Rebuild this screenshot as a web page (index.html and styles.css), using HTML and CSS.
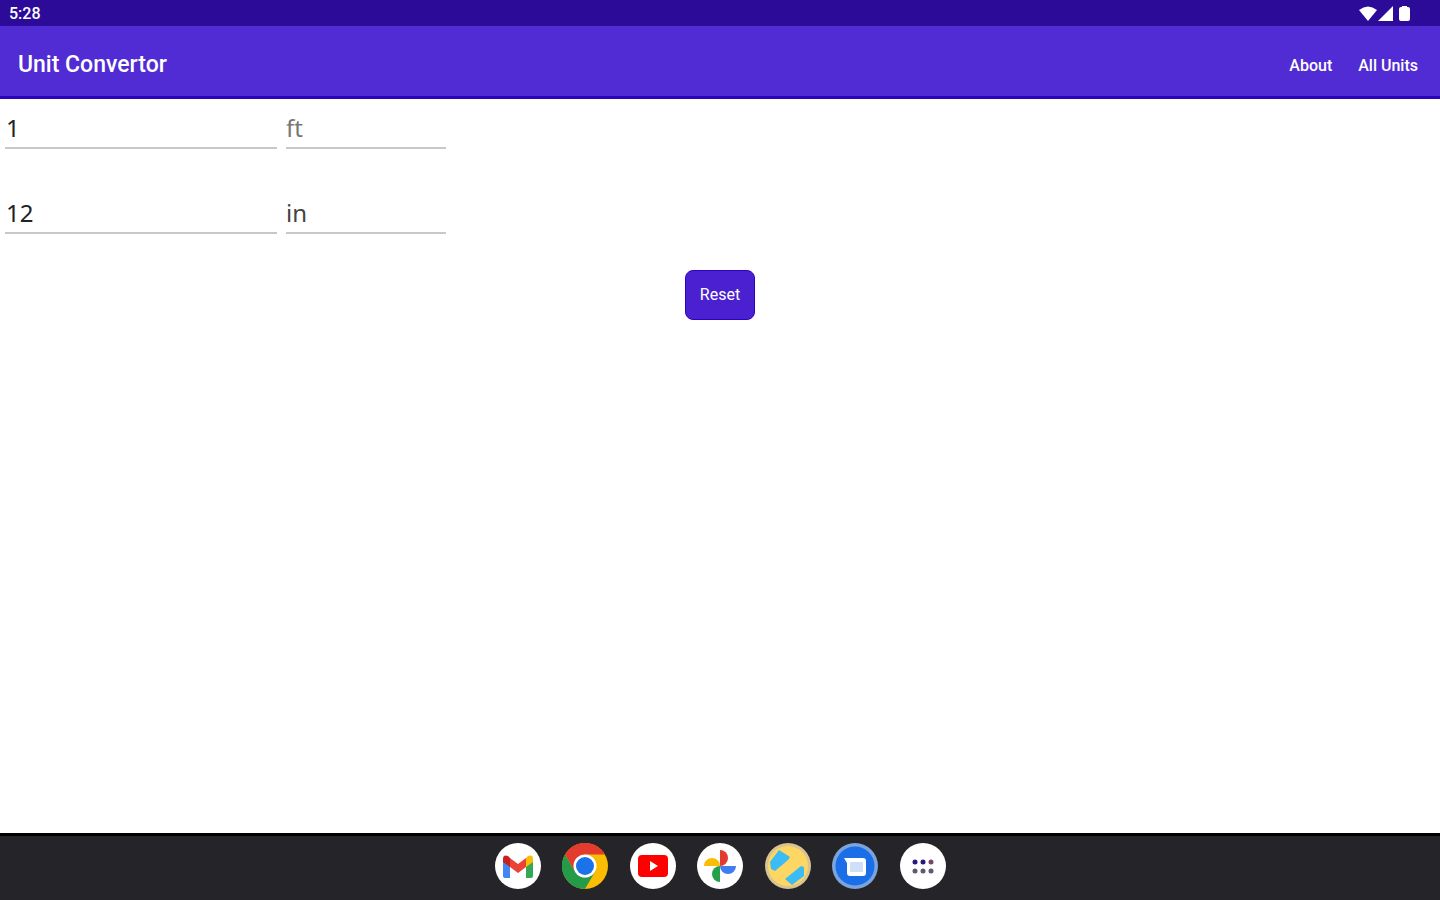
FILE: index.html
```html
<!DOCTYPE html>
<html lang="en">
<head>
    <meta charset="utf-8">
    <title>Unit Convertor</title>
    <meta name="viewport" content="width=device-width, initial-scale=1">
    <link rel="stylesheet" href="styles.css">
</head>
<body>
    <div class="status-bar">
        <span class="clock">5:28</span>
        <div class="status-icons">
            <svg width="18" height="16" viewBox="0 0 18 16"><path d="M0 4Q9-3 18 4L9 15Z" fill="#fff"/></svg>
            <svg width="16" height="16" viewBox="0 0 16 16"><path d="M15 0V15H0Z" fill="#fff"/></svg>
            <svg class="battery" width="11" height="16" viewBox="0 0 11 16"><path d="M3 0h5v1h1q2 0 2 2v10q0 2-2 2H2q-2 0-2-2V3q0-2 2-2h1z" fill="#fff"/></svg>
        </div>
    </div>

    <header class="app-bar">
        <h1>Unit Convertor</h1>
        <nav class="menu">
            <a href="#about">About</a>
            <a href="#units">All Units</a>
        </nav>
    </header>

    <main class="content">
        <form id="converter">
            <div class="unit-row">
                <input type="text" class="field amount" id="from-amount" aria-label="From amount" value="1">
                <select class="field unit from-unit" id="from-unit" aria-label="From unit">
                    <option>ft</option>
                </select>
            </div>
            <div class="unit-row">
                <input type="text" class="field amount" id="to-amount" aria-label="To amount" value="12">
                <select class="field unit" id="to-unit" aria-label="To unit">
                    <option>in</option>
                </select>
            </div>
            <button type="reset" class="reset-button">Reset</button>
        </form>
    </main>

    <footer class="taskbar">
        <div class="dock">
            <button class="app" aria-label="Gmail">
                <svg viewBox="0 0 46 46">
                    <circle cx="23" cy="23" r="23" fill="#fff"/>
                    <path d="M8 18l7 5v12h-5q-2 0-2-2z" fill="#4285f4"/>
                    <path d="M31 23l7-5v15q0 2-2 2h-5z" fill="#34a853"/>
                    <path d="M31 15l2-2q5-2 5 3v3l-7 5z" fill="#fbbc04"/>
                    <path d="M15 15l8 6 8-6v9l-8 6-8-6z" fill="#ea4335"/>
                    <path d="M8 16q0-5 5-3l2 2v9l-7-5z" fill="#c5221f"/>
                </svg>
            </button>
            <button class="app" aria-label="Chrome">
                <svg viewBox="0 0 46 46">
                    <circle cx="23" cy="23" r="23" fill="#fbbc04"/>
                    <path d="M3 11.5A23 23 0 0 1 43 11.5H23L13 29Z" fill="#e33b2e"/>
                    <path d="M3 11.5A23 23 0 0 0 23 46L33 28.7 23 34.5 13 28.7Z" fill="#249b48"/>
                    <circle cx="23" cy="23" r="11.5" fill="#fff"/>
                    <circle cx="23" cy="23" r="9" fill="#1a73e8"/>
                </svg>
            </button>
            <button class="app" aria-label="YouTube">
                <svg viewBox="0 0 46 46">
                    <circle cx="23" cy="23" r="23" fill="#fff"/>
                    <rect x="8" y="12" width="30" height="22" rx="4" fill="#f00"/>
                    <path d="M20 18l8 5-8 5z" fill="#fff"/>
                </svg>
            </button>
            <button class="app" aria-label="Photos">
                <svg viewBox="0 0 46 46">
                    <circle cx="23" cy="23" r="23" fill="#fff"/>
                    <path d="M23 7a8 8 0 0 1 0 16z" fill="#e33b2e"/>
                    <path d="M39 23a8 8 0 0 1-16 0z" fill="#3f7df0"/>
                    <path d="M23 39a8 8 0 0 1 0-16z" fill="#24a148"/>
                    <path d="M7 23a8 8 0 0 1 16 0z" fill="#fbbc04"/>
                </svg>
            </button>
            <button class="app" aria-label="Unit Convertor">
                <svg viewBox="0 0 46 46">
                    <circle cx="23" cy="23" r="23" fill="#d8c391"/>
                    <circle cx="23" cy="23" r="20" fill="#fdd663"/>
                    <path d="M5 19L14 7 25 14 23 17 10 28 6 26Z" fill="#3cbcf5"/>
                    <path d="M20 36L36 23 39 24V33L27 42Z" fill="#3cbcf5"/>
                </svg>
            </button>
            <button class="app" aria-label="Messages">
                <svg viewBox="0 0 46 46">
                    <circle cx="23" cy="23" r="23" fill="#7ba4dc"/>
                    <circle cx="23" cy="23" r="19.5" fill="#1a6ee8"/>
                    <path d="M12 15h19q3 0 3 3v12q0 3-3 3H18q-3 0-3-3V20z" fill="#fff"/>
                    <rect x="18" y="19" width="13" height="10" rx="1" fill="#cfdffa"/>
                </svg>
            </button>
            <button class="app" aria-label="All apps">
                <svg viewBox="0 0 46 46">
                    <circle cx="23" cy="23" r="23" fill="#fff"/>
                    <g fill="#29187a">
                        <circle cx="15" cy="19" r="2.5"/>
                        <circle cx="23" cy="19" r="2.5"/>
                        <circle cx="31" cy="19" r="2.5" fill="#7a4668"/>
                    </g>
                    <g fill="#5b5b70">
                        <circle cx="15" cy="28" r="2.5"/>
                        <circle cx="23" cy="28" r="2.5"/>
                        <circle cx="31" cy="28" r="2.5"/>
                    </g>
                </svg>
            </button>
        </div>
    </footer>
</body>
</html>
```
FILE: styles.css
```css
* {
    box-sizing: border-box;
}

body {
    font-family: Roboto, sans-serif;
    background-color: #fff;
    margin: 0;
    min-height: 100vh;
    display: flex;
    flex-direction: column;
}

.status-bar {
    display: flex;
    justify-content: space-between;
    align-items: center;
    padding: 3px 30px 1px 9px;
    background-color: #2b0b98;
    color: #fff;
}

.clock {
    font-size: 16px;
    font-weight: 500;
    line-height: 22px;
}

.status-icons {
    display: flex;
    gap: 1px;
}

.battery {
    margin-left: 4px;
}

.app-bar {
    display: flex;
    justify-content: space-between;
    align-items: center;
    padding: 24px 22px 16px 18px;
    background-color: #512bd4;
    border-bottom: 3px solid #2a05bd;
    color: #fff;
}

h1 {
    margin: 0;
    font-size: 23px;
    font-weight: 500;
    line-height: 30px;
}

.menu {
    display: flex;
    gap: 26px;
}

.menu a {
    color: #fff;
    font-size: 16px;
    font-weight: 500;
    text-decoration: none;
}

.content {
    flex: 1;
    padding: 12px 5px;
}

.unit-row {
    display: flex;
    gap: 9px;
    margin-bottom: 47px;
}

.unit-row:nth-child(2) {
    margin-bottom: 36px;
}

.field {
    height: 38px;
    padding: 0 1px 4px;
    border: none;
    border-bottom: 2px solid #c8c8c8;
    border-radius: 0;
    background: none;
    color: #222;
    font-family: "Noto Sans", sans-serif;
    font-size: 24px;
    line-height: 32px;
    outline: none;
    appearance: none;
}

.amount {
    width: 272px;
}

.unit {
    width: 160px;
    padding: 1px 0 3px;
    color: #444;
}

.from-unit {
    color: #777;
}

.reset-button {
    display: block;
    margin: 0 auto;
    padding: 15px 14px;
    border: 1px solid #2a05bd;
    border-radius: 8px;
    background-color: #4a20d0;
    color: #fff;
    font-family: inherit;
    font-size: 16px;
    line-height: 18px;
    cursor: pointer;
}

.taskbar {
    display: flex;
    justify-content: center;
    padding: 7px 0 11px;
    background-color: #252529;
    border-top: 3px solid #000;
}

.dock {
    display: flex;
    justify-content: space-between;
    width: 451px;
}

.app {
    width: 46px;
    height: 46px;
    padding: 0;
    border: none;
    border-radius: 50%;
    background: none;
    cursor: pointer;
}

.app svg {
    display: block;
}
```
